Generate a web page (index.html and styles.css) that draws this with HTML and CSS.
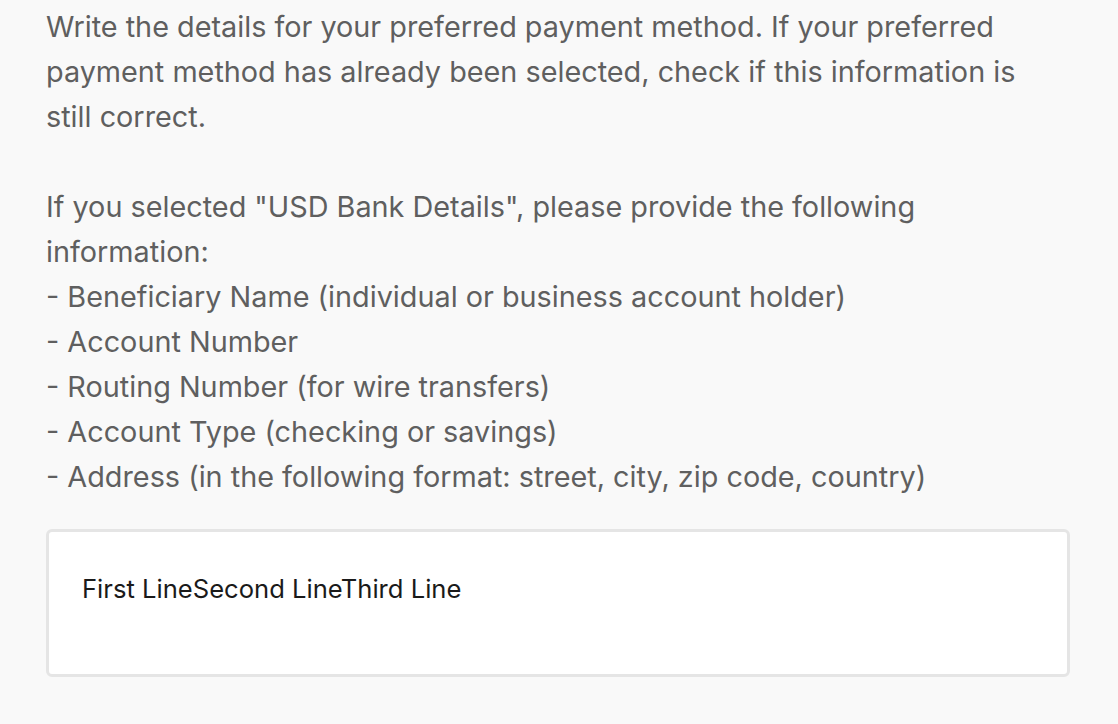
FILE: index.html
```html
<!DOCTYPE html>
<html>
<head>
<meta charset="utf-8">
<link rel="stylesheet" href="styles.css">
</head>
<body>
<div class="wrap">
<p class="desc">Write the details for your preferred payment method. If your preferred payment method has already been selected, check if this information is still correct.

If you selected "USD Bank Details", please provide the following information:
- Beneficiary Name (individual or business account holder)
- Account Number
- Routing Number (for wire transfers)
- Account Type (checking or savings)
- Address (in the following format: street, city, zip code, country)</p>
<div class="field">First LineSecond LineThird Line</div>
</div>
</body>
</html>
```
FILE: styles.css
```css
html, body {
  margin: 0;
  padding: 0;
  background: #f9f9f9;
}
.wrap {
  padding: 4px 48px 0 46px;
  font-family: Inter, "Noto Sans", sans-serif;
}
.desc {
  margin: 0 30px 0 0;
  white-space: pre-wrap;
  font-size: 28.8px;
  line-height: 45px;
  color: #5f5f5f;
}
.field {
  margin-top: 30px;
  background: #fff;
  border: 3px solid #e5e5e5;
  border-radius: 6px;
  height: 148px;
  box-sizing: border-box;
  padding: 41px 33px;
  font-size: 25.6px;
  color: #1a1a1a;
  line-height: 32px;
}
```
